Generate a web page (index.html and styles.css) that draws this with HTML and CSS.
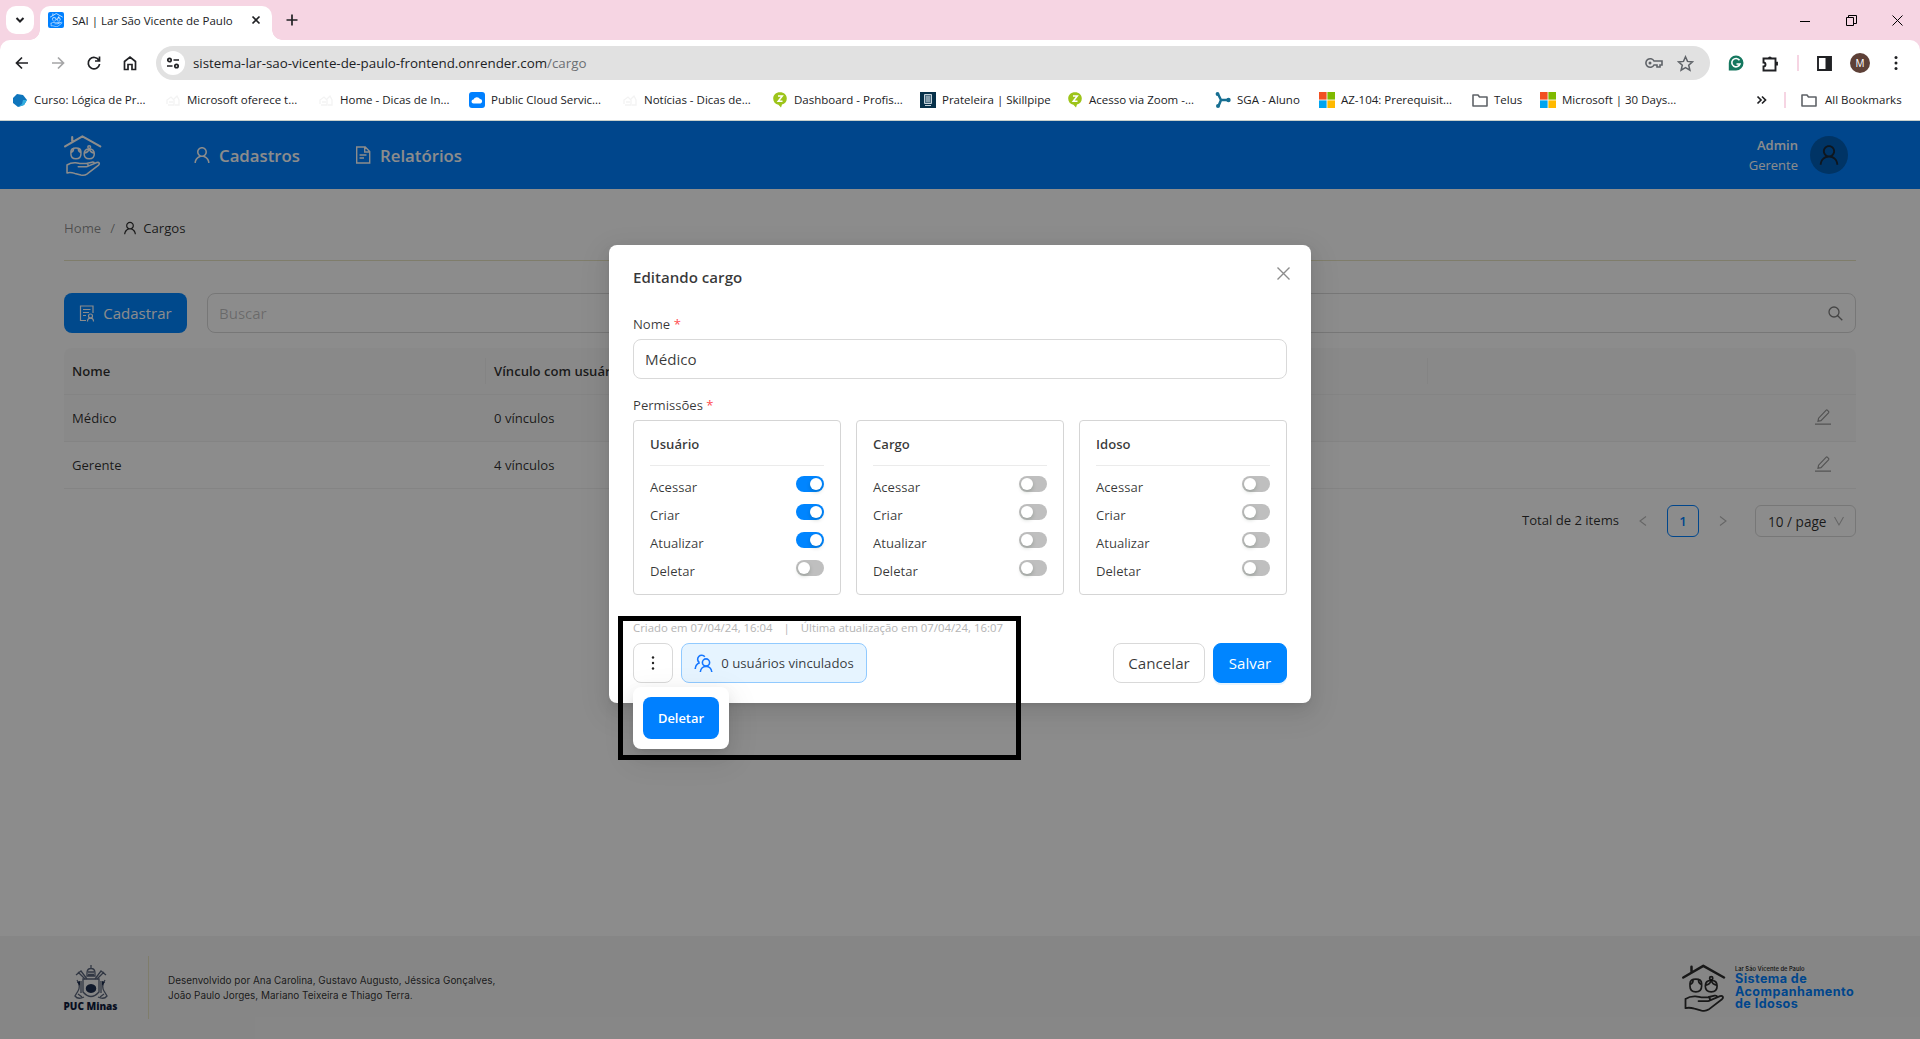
FILE: index.html
```html
<!DOCTYPE html>
<html lang="pt-BR">
<head>
<meta charset="utf-8">
<title>SAI | Lar São Vicente de Paulo</title>
<link rel="stylesheet" href="styles.css">
</head>
<body>
<svg class="defs" aria-hidden="true">
  <symbol id="user" viewBox="64 64 896 896"><path fill="currentColor" d="M858.5 763.6a374 374 0 00-80.6-119.5 375.63 375.63 0 00-119.5-80.6c-.4-.2-.8-.3-1.2-.5C719.500 518 760 444.700 760 362c0-137-111-248-248-248S264 225 264 362c0 82.700 40.500 156 102.800 201.100-.4.2-.8.3-1.200.5-44.800 18.900-85 46-119.500 80.600a375.630 375.630 0 00-80.600 119.500A371.700 371.700 0 00136 901.800a8 8 0 008 8.200h60c4.400 0 7.900-3.500 8-7.800 2-77.200 33-149.500 87.800-204.300 56.700-56.700 132-87.900 212.200-87.900s155.500 31.200 212.200 87.900C779 752.700 810 825 812 902.200c.1 4.400 3.600 7.800 8 7.800h60a8 8 0 008-8.200c-1-47.800-10.900-94.300-29.500-138.200zM512 534c-45.900 0-89.100-17.900-121.600-50.400S340 407.900 340 362c0-45.900 17.900-89.100 50.400-121.600S466.100 190 512 190s89.100 17.900 121.600 50.400S684 316.100 684 362c0 45.900-17.900 89.100-50.400 121.600S557.900 534 512 534z"/></symbol>
  <symbol id="care" viewBox="0 0 44 48"><g fill="none" stroke="currentColor" stroke-linecap="round" stroke-linejoin="round">
    <path stroke-width="2.500" d="M1.300 13.500 21.300 1.800 42 13.500M9.500 7.500V2.800"/>
    <g stroke-width="1.700"><path d="M8 19.500c0-3 2-4.300 5.800-4.300s5.800 1.300 5.800 4.300v2.700c0 3.600-2.400 5.600-5.800 5.600S8 25.800 8 22.200zM11 15.600c.3 2-.5 3.800-2.800 5M16.600 15.600c-.3 2 .5 3.800 2.800 5"/><path d="M23.300 22c0-3.500 2.300-5.600 5.900-5.600s5.900 2.100 5.900 5.600c0 3.600-2.300 5.800-5.900 5.800s-5.900-2.200-5.900-5.800zM29.200 16.400c-.8 2.600-2.500 4-5.300 4.700M29.200 16.400c.8 2.600 2.500 4 5.300 4.700"/><circle cx="29.200" cy="14.300" r="1.600"/></g>
    <path stroke-width="1.800" d="M3.500 35v9.200c3-.9 6-.4 9 .5l7 1.900c3 .7 5 .4 7-1L40 35.200c2-2 .5-3.900-2-3L28 36.300M3.500 35c3-2 6-2.800 10-2.600 3 .1 4 1 6 .9h6.500c2.700.2 2.700 3.600 0 3.800h-9.500M27 33l5.500-1.300c2-.4 3 .7 2.200 1.800"/>
  </g></symbol>
  <symbol id="edit" viewBox="0 0 16 16"><path fill="none" stroke="currentColor" stroke-width="1.200" d="M0 15.200h16M3 12.200l.6-3L11 1.300c.5-.5 1-.5 1.500 0l1 1c.4.5.4 1 0 1.500l-7.500 7.800zM3 12.200l3-.6"/></symbol>
  <symbol id="folder" viewBox="0 0 16 16"><path fill="none" stroke="#5f6368" stroke-width="1.600" stroke-linejoin="round" d="M1 3h5l1.500 2H15v9H1z"/></symbol>
  <symbol id="faint" viewBox="0 0 16 16"><path fill="none" stroke="#f3f3f3" stroke-width="1.300" d="M2 12V8l4-3 3 3v5H3M9 7l3-3 2 4v5h-4M4 10h4"/></symbol>
  <symbol id="zed" viewBox="0 0 16 16"><path fill="#9dc41a" d="M8 .3c4 0 6.800 2.700 6.800 6.300 0 3.500-2 5.400-4.800 6l-1 3-2.600-2.800C3.300 12.200 1.200 10 1.200 6.600 1.200 3 4 .3 8 .3z"/><path fill="none" stroke="#fff" stroke-width="1.500" d="M6 4h4.300L6.200 9.300h4.300"/></symbol>
  <symbol id="win" viewBox="0 0 16 16"><path fill="#f25022" d="M0 0h7.600v7.600H0z"/><path fill="#7fba00" d="M8.400 0H16v7.600H8.400z"/><path fill="#00a4ef" d="M0 8.400h7.600V16H0z"/><path fill="#ffb900" d="M8.400 8.400H16V16H8.400z"/></symbol>
</svg>

<div class="browser">
  <div class="tabstrip">
    <div class="tabsearch"><svg width="10" height="10" viewBox="0 0 10 10"><path class="ln2" d="M1.500 3 5 6.500 8.500 3"/></svg></div>
    <div class="tab">
      <span class="favicon"><svg width="13" height="14"><use href="#care"/></svg></span>
      <span class="tabtitle">SAI | Lar São Vicente de Paulo</span>
      <svg width="10" height="10" viewBox="0 0 10 10"><path class="ln" d="M1.500 1.500l7 7m0-7l-7 7"/></svg>
    </div>
    <svg class="newtab" width="12" height="12" viewBox="0 0 12 12"><path class="ln" d="M6 .5v11M.5 6h11"/></svg>
    <div class="winbtns">
      <svg width="11" height="11" viewBox="0 0 11 11"><path d="M0 6.500h10" stroke="#000"/></svg>
      <svg width="11" height="11" viewBox="0 0 11 11"><path d="M.5 2.500h7v8h-7zM2.500 2.500v-2h8v8h-3" fill="none" stroke="#000"/></svg>
      <svg width="11" height="11" viewBox="0 0 11 11"><path d="M.5.5l10 10m0-10l-10 10" stroke="#000"/></svg>
    </div>
  </div>
  <div class="toolbar">
    <div class="navbtns">
      <svg width="16" height="16" viewBox="0 0 16 16"><path class="ln" d="M14 8H3M8 2.500 2.500 8 8 13.500"/></svg>
      <svg class="off" width="16" height="16" viewBox="0 0 16 16"><path class="ln" d="M2 8h11M8 2.500 13.500 8 8 13.500"/></svg>
      <svg width="16" height="16" viewBox="0 0 16 16"><path class="ln" d="M13 5.500A5.700 5.700 0 1 0 13.600 9M13.500 1.500V6H9"/></svg>
      <svg width="16" height="16" viewBox="0 0 16 16"><path class="ln" d="M2.500 6.500 8 2l5.500 4.500v8H10v-5H6v5H2.500z"/></svg>
    </div>
    <div class="omnibox">
      <span class="siteinfo"><svg width="14" height="12" viewBox="0 0 14 12"><path class="ln" d="M7.500 3H13M1 9h5.500"/><circle class="ln" cx="3.500" cy="3" r="1.700"/><circle class="ln" cx="10.500" cy="9" r="1.700"/></svg></span>
      <span class="url">sistema-lar-sao-vicente-de-paulo-frontend.onrender.com<i>/cargo</i></span>
      <svg width="19" height="12" viewBox="0 0 19 12"><path fill="none" stroke="#5f6368" stroke-width="1.600" d="M10 4h8v4h-2v2h-3V8h-3a4.300 4.300 0 1 1 0-4z"/><circle cx="6" cy="6" r="1.500" fill="#5f6368"/></svg>
      <svg width="17" height="17" viewBox="0 0 17 17"><path fill="none" stroke="#5f6368" stroke-width="1.500" d="M8.500 1.800l2 4.600 5 .5-3.800 3.300 1.200 4.900-4.400-2.600-4.400 2.600 1.200-4.900L1.500 6.900l5-.5z"/></svg>
    </div>
    <div class="actions">
      <svg width="16" height="16" viewBox="0 0 16 16"><path fill="#15775f" d="M8 .5a7.500 7.500 0 1 1 0 15H.8V8A7.300 7.300 0 0 1 8 .5z"/><path fill="none" stroke="#fff" stroke-width="1.600" d="M11.500 5.300A4.200 4.200 0 1 0 12 9H8.500"/></svg>
      <svg width="17" height="17" viewBox="0 0 17 17"><path fill="none" stroke="#202124" stroke-width="1.900" d="M1.500 3.500h12v4.300h1.500v1.700h-1.500v6h-12v-4a2 2 0 0 0 0-4z"/><path fill="#202124" d="M6 3.500a1.900 1.900 0 0 1 3.800 0z"/></svg>
      <i class="pinkbar"></i>
      <svg width="15" height="15" viewBox="0 0 15 15"><path fill="none" stroke="#202124" stroke-width="1.900" d="M1 1h13v13H1z"/><path fill="#202124" d="M8.500 1H14v13H8.500z"/></svg>
      <b class="profile">M</b>
      <svg class="kebab" width="4" height="16" viewBox="0 0 4 16"><g fill="#202124"><circle cx="2" cy="2.500" r="1.500"/><circle cx="2" cy="8" r="1.500"/><circle cx="2" cy="13.500" r="1.500"/></g></svg>
    </div>
  </div>
  <div class="bookmarks">
    <span class="bm"><svg viewBox="0 0 16 16"><path fill="#0f75bc" d="M5 2l6 1 4 5-3 5-6 2-5-4 0-5z"/><path fill="#33aee0" d="M15 8l-3 5-6 2 4-3 1-4z"/></svg>Curso: Lógica de Pr...</span>
    <span class="bm"><svg><use href="#faint"/></svg>Microsoft oferece t...</span>
    <span class="bm"><svg><use href="#faint"/></svg>Home - Dicas de In...</span>
    <span class="bm"><svg viewBox="0 0 16 16"><rect width="16" height="16" rx="3" fill="#0080ff"/><path fill="#fff" d="M4.500 11.500a2 2 0 0 1 0-4 3.500 3 0 0 1 6.500-.5 2.300 2.300 0 0 1 .5 4.500z"/></svg>Public Cloud Servic...</span>
    <span class="bm"><svg><use href="#faint"/></svg>Notícias - Dicas de...</span>
    <span class="bm"><svg><use href="#zed"/></svg>Dashboard - Profis...</span>
    <span class="bm"><svg viewBox="0 0 16 16"><path fill="#07314a" d="M0 0h16v16H0z"/><path fill="#4d6f83" stroke="#c4d2da" d="M4.500 2.500h7v9h-7z"/><path stroke="#c4d2da" d="M6 5h4M6 7h4M6 9h4M5 13.500h6"/></svg>Prateleira | Skillpipe</span>
    <span class="bm"><svg><use href="#zed"/></svg>Acesso via Zoom -...</span>
    <span class="bm"><svg viewBox="0 0 16 16"><path fill="none" stroke="#176f92" stroke-width="2.500" d="M3 2l3 6-2.500 6M6 8h7"/><circle cx="2.500" cy="2" r="1.900" fill="#176f92"/><circle cx="3" cy="14" r="2" fill="#176f92"/><circle cx="13.500" cy="8" r="2.200" fill="#176f92"/></svg>SGA - Aluno</span>
    <span class="bm"><svg><use href="#win"/></svg>AZ-104: Prerequisit...</span>
    <span class="bm"><svg><use href="#folder"/></svg>Telus</span>
    <span class="bm"><svg><use href="#win"/></svg>Microsoft | 30 Days...</span>
    <svg class="more" viewBox="0 0 10 10"><path class="ln" d="M1 1.500 4.500 5 1 8.500M5.500 1.500 9 5 5.500 8.500"/></svg>
    <i class="pinkbar"></i>
    <span class="bm"><svg><use href="#folder"/></svg>All Bookmarks</span>
  </div>
</div>

<div class="app">
  <header class="topbar">
    <svg class="brand"><use href="#care"/></svg>
    <nav>
      <span class="navitem"><svg width="18" height="18"><use href="#user"/></svg>Cadastros</span>
      <span class="navitem"><svg width="18" height="18" viewBox="0 0 18 18"><path fill="none" stroke="currentColor" stroke-width="1.400" d="M2.700 1h8.500L15.700 5.500V17h-13zM10.700 1v5h5M5.500 9h7M5.500 12h4.500"/></svg>Relatórios</span>
    </nav>
    <div class="who"><b>Admin</b><span>Gerente</span></div>
    <div class="avatar"><svg width="22" height="22"><use href="#user"/></svg></div>
  </header>
  <main>
    <div class="crumbs"><span class="dim">Home</span><span class="dim slash">/</span><svg width="14" height="14"><use href="#user"/></svg><span>Cargos</span></div>
    <div class="tools">
      <div class="btn-new"><svg width="16" height="17" viewBox="0 0 16 17"><g fill="none" stroke="currentColor" stroke-width="1.200"><path d="M7 15.500H1.500V1h12.500v7M4 4.500h7.500M4 7.500h6M4 10.500h3"/><circle cx="11.500" cy="11" r="2"/><path d="M8.500 16.500c0-4.500 6-4.500 6 0"/></g></svg>Cadastrar</div>
      <div class="search"><span>Buscar</span><svg width="15" height="15" viewBox="0 0 15 15"><g fill="none" stroke="currentColor" stroke-width="1.300"><circle cx="6" cy="6" r="5"/><path d="M9.700 9.700l4.600 4.600"/></g></svg></div>
    </div>
    <div class="table">
      <div class="tr th"><div>Nome</div><div>Vínculo com usuários</div><div></div></div>
      <div class="tr hover"><div>Médico</div><div>0 vínculos</div><div><svg width="16" height="16"><use href="#edit"/></svg></div></div>
      <div class="tr"><div>Gerente</div><div>4 vínculos</div><div><svg width="16" height="16"><use href="#edit"/></svg></div></div>
    </div>
    <div class="pager">
      <span class="total">Total de 2 items</span>
      <svg class="arrow" viewBox="0 0 12 12"><path d="M9 1.500 3 6l6 4.500"/></svg>
      <span class="page">1</span>
      <svg class="arrow" viewBox="0 0 12 12"><path d="M3 1.500 9 6l-6 4.500"/></svg>
      <span class="size">10 / page<svg class="arrow" viewBox="0 0 12 12"><path d="M1.500 2 6 10l4.500-8"/></svg></span>
    </div>
  </main>
  <footer>
    <div class="puc">
      <svg width="36" height="36" viewBox="0 0 36 36"><g fill="none" stroke="#59647a" stroke-width="1.300"><path d="M14 9c0-6 8-6 8 0v3h-8zM18 1v4M15 8h6M15 10.500h6"/><path d="M10 15h16v13q-8 9-16 0z"/><path d="M3 11l5-4 6 8M33 11l-5-4-6 8M5 8l7 7M31 8l-7 7"/><path d="M4 16q4 6 1 11t-3 5q3 4 9 1M32 16q-4 6-1 11t3 5q-3 4-9 1M8 17v12M28 17v12M5 30l4 3M31 30l-4 3"/></g><path fill="#1e2f4f" d="M18 20c7 0 7 9 0 9s-7-9 0-9zM4 18l3-1v5zM32 18l-3-1v5z"/></svg>
      <b>PUC Minas</b>
    </div>
    <p class="credits">Desenvolvido por Ana Carolina, Gustavo Augusto, Jéssica Gonçalves,<br>João Paulo Jorges, Mariano Teixeira e Thiago Terra.</p>
    <div class="sai">
      <svg width="44" height="48"><use href="#care"/></svg>
      <div><small>Lar São Vicente de Paulo</small><b>Sistema de<br>Acompanhamento<br>de Idosos</b></div>
    </div>
  </footer>

  <div class="mask"></div>
  <div class="modal">
    <div class="head"><h1>Editando cargo</h1><svg width="13" height="13" viewBox="0 0 13 13"><path fill="none" stroke="#8c8c8c" stroke-width="1.400" d="M.5.5l12 12m0-12l-12 12"/></svg></div>
    <label>Nome <em>*</em></label>
    <div class="input">Médico</div>
    <label class="second">Permissões <em>*</em></label>
    <div class="cards">
      <section class="card"><h2>Usuário</h2>
        <div class="perm">Acessar<i class="switch on"></i></div><div class="perm">Criar<i class="switch on"></i></div><div class="perm">Atualizar<i class="switch on"></i></div><div class="perm">Deletar<i class="switch"></i></div></section>
      <section class="card"><h2>Cargo</h2>
        <div class="perm">Acessar<i class="switch"></i></div><div class="perm">Criar<i class="switch"></i></div><div class="perm">Atualizar<i class="switch"></i></div><div class="perm">Deletar<i class="switch"></i></div></section>
      <section class="card"><h2>Idoso</h2>
        <div class="perm">Acessar<i class="switch"></i></div><div class="perm">Criar<i class="switch"></i></div><div class="perm">Atualizar<i class="switch"></i></div><div class="perm">Deletar<i class="switch"></i></div></section>
    </div>
    <div class="stamps"><span>Criado em 07/04/24, 16:04</span><span>|</span><span>Última atualização em 07/04/24, 16:07</span></div>
    <div class="foot">
      <div class="btn dots"><svg width="4" height="16" viewBox="0 0 4 16"><g fill="#222"><circle cx="2" cy="2.500" r="1.200"/><circle cx="2" cy="8" r="1.200"/><circle cx="2" cy="13.500" r="1.200"/></g></svg></div>
      <div class="btn linked"><svg width="19" height="19" viewBox="0 0 19 19"><g fill="none" stroke="#1677ff" stroke-width="1.600"><circle cx="12" cy="8.500" r="3.600"/><path d="M6.300 18c.5-7.500 11-7.500 11.500 0"/><path d="M10.800 2.800A4 4 0 1 0 5.300 8.500M1.200 15c.2-3.500 1.600-5.500 4.600-6.300"/></g></svg>0 usuários vinculados</div>
      <span class="grow"></span>
      <div class="btn cancel">Cancelar</div>
      <div class="btn save">Salvar</div>
    </div>
  </div>
  <div class="popover"><div class="delete">Deletar</div></div>
  <div class="marker"></div>
</div>
</body>
</html>
```
FILE: styles.css
```css
* { box-sizing: border-box; }
body { margin: 0; width: 1920px; height: 1039px; overflow: hidden; position: relative; font-family: "Open Sans", "Noto Sans", sans-serif; font-size: 13.1px; color: rgba(0,0,0,.82); background: #fff; }
svg { display: block; flex: none; }
i { font-style: normal; }
.defs { position: absolute; width: 0; height: 0; }
.ln { fill: none; stroke: #202124; stroke-width: 1.7; }
.ln2 { fill: none; stroke: #202124; stroke-width: 2; }
.off { opacity: .4; }

/* browser chrome */
.browser { height: 121px; border-bottom: 1px solid #c8d0cc; background: #f6d5e3; font-size: 11.5px; color: #202124; white-space: nowrap; }
.tabstrip { height: 40px; display: flex; align-items: center; padding-left: 6px; }
.tabsearch { width: 28px; height: 28px; border-radius: 10px; background: #fff; display: grid; place-items: center; }
.tab { position: relative; align-self: flex-end; width: 232px; height: 34px; margin-left: 6px; padding: 0 11px 6px 8px; background: #fff; border-radius: 10px 10px 0 0; display: flex; align-items: center; gap: 8px; }
.tab::before, .tab::after { content: ""; position: absolute; bottom: 0; width: 10px; height: 10px; }
.tab::before { left: -10px; background: radial-gradient(circle at 0 0, transparent 9.5px, #fff 10px); }
.tab::after { right: -10px; background: radial-gradient(circle at 100% 0, transparent 9.5px, #fff 10px); }
.favicon { width: 16px; height: 16px; border-radius: 2px; background: #0080ff; color: #fff; display: grid; place-items: center; }
.tabtitle { flex: 1; }
.newtab { margin-left: 14px; }
.winbtns { margin-left: auto; display: flex; gap: 35px; padding-right: 17px; }
.toolbar { height: 45px; background: #fff; border-radius: 10px 10px 0 0; display: flex; align-items: center; padding: 1px 20px 0 14px; }
.navbtns { display: flex; gap: 20px; width: 142px; }
.omnibox { width: 1554px; height: 34px; border-radius: 17px; background: #e1e1e1; display: flex; align-items: center; padding: 0 16px 0 5px; gap: 14px; }
.siteinfo { width: 24px; height: 24px; border-radius: 12px; background: #fff; display: grid; place-items: center; }
.url { flex: 1; font-size: 13.35px; margin-left: -6px; }
.url i { color: #6c6f73; }
.actions { display: flex; align-items: center; gap: 18px; margin-left: 18px; }
.actions .kebab { margin-left: 6px; }
.pinkbar { width: 2px; height: 16px; background: #f6d5e3; }
.profile { width: 20px; height: 20px; border-radius: 50%; background: #5d4037; color: #fff; font-weight: 400; font-size: 10px; display: grid; place-items: center; }
.bookmarks { height: 35px; background: #fff; display: grid; align-items: center; padding: 0 0 6px 12px; grid-template-columns: 153px 153px 151px 153px 150px 148px 147px 148px 104px 153px 68px 216px 28px 17px 120px; }
.bm { display: flex; align-items: center; gap: 6px; line-height: 16px; }
.bm:last-child { gap: 8px; }
.bm svg { width: 16px; height: 16px; }
.more { width: 11px; height: 10px; }

/* application */
.app { height: 918px; display: flex; flex-direction: column; }
.topbar { height: 68px; background: #0080ff; color: #fff; display: flex; align-items: center; padding: 0 72px 0 64px; }
.brand { width: 38px; height: 43px; }
nav { display: flex; gap: 54px; margin-left: 91px; flex: 1; }
.navitem { display: flex; align-items: center; gap: 8px; font-size: 16.8px; font-weight: 600; }
.who { display: flex; flex-direction: column; text-align: right; line-height: 20px; font-size: 13px; }
.who b { font-weight: 600; }
.avatar { width: 38px; height: 38px; border-radius: 50%; margin-left: 12px; background: #005fb8; color: #1a2838; display: grid; place-items: center; }
main { flex: 1; padding: 0 64px; }
.crumbs { height: 72px; border-bottom: 1px solid #e8e4c4; padding-top: 30px; line-height: 18px; font-size: 13.2px; display: flex; }
.crumbs svg { margin: 2px 6px 0 0; }
.dim { color: rgba(0,0,0,.45); }
.slash { margin: 0 8px 0 9px; }
.tools { display: flex; gap: 20px; margin-top: 32px; }
.btn-new { width: 123px; height: 40px; border-radius: 8px; background: #0085ff; color: #fff; font-size: 15px; display: flex; align-items: center; justify-content: center; gap: 8px; }
.search { flex: 1; height: 40px; border: 1px solid #d9d9d9; border-radius: 8px; padding: 0 12px 0 11px; display: flex; align-items: center; justify-content: space-between; font-size: 15px; color: rgba(0,0,0,.5); }
.search span { color: rgba(0,0,0,.25); }
.table { margin-top: 15px; }
.tr { height: 47px; border-bottom: 1px solid #f0f0f0; display: grid; grid-template-columns: 422px 942px 1fr; align-items: center; }
.tr div { padding-left: 8px; }
.tr div:last-child { display: flex; justify-content: flex-end; padding: 0 25px 3px 0; color: rgba(0,0,0,.4); }
.th { background: #fafafa; font-weight: 600; border-radius: 8px 8px 0 0; }
.th div { height: 26px; line-height: 26px; border-right: 1px solid #f0f0f0; }
.th div:last-child { border: 0; }
.hover { background: #fafafa; }
.pager { margin-top: 16px; display: flex; justify-content: flex-end; align-items: center; }
.total { padding-bottom: 3px; }
.arrow { width: 12px; height: 12px; fill: none; stroke: rgba(0,0,0,.28); stroke-width: 1.1; margin-left: 18px; }
.page { width: 32px; height: 32px; border: 1px solid #0080ff; border-radius: 6px; color: #0080ff; display: grid; place-items: center; font-weight: 600; margin-left: 18px; }
.size { width: 101px; height: 32px; border: 1px solid #d9d9d9; border-radius: 6px; margin-left: 26px; padding: 0 10px 0 12px; display: flex; align-items: center; justify-content: space-between; font-size: 13.6px; }
.size .arrow { margin: 0; }
footer { height: 103px; background: #f5f5f5; padding: 0 64px; display: flex; align-items: center; font-family: Inter, sans-serif; }
.puc { width: 85px; height: 63px; padding: 8px 31px 0 0; border-right: 1px solid #e8e4c4; display: flex; flex-direction: column; align-items: center; color: #101c3c; font: 700 10px/13px "Open Sans", sans-serif; white-space: nowrap; }
.credits { margin: 0 0 0 19px; flex: 1; font-size: 9.95px; line-height: 15px; }
.sai { display: flex; gap: 9px; align-items: center; width: 174px; }
.sai small { display: block; font-size: 5.8px; line-height: 9px; font-weight: 600; }
.sai b { display: block; font-size: 12.6px; line-height: 12.4px; letter-spacing: .42px; color: #0080ff; white-space: nowrap; }

/* overlay layers */
.mask { position: absolute; inset: 121px 0 0; background: rgba(0,0,0,.45); }
.modal { position: absolute; left: 609px; top: 245px; width: 702px; height: 458px; padding: 0 24px; background: #fff; border-radius: 8px; box-shadow: 0 6px 16px rgba(0,0,0,.08), 0 3px 6px -4px rgba(0,0,0,.12), 0 9px 28px 8px rgba(0,0,0,.05); color: rgba(0,0,0,.78); }
.head { display: flex; justify-content: space-between; height: 70px; padding: 21px 0 0; }
.head h1 { margin: 0; font-size: 15.1px; line-height: 22px; font-weight: 600; }
.head svg { margin: 1px -3px 0 0; }
label { display: block; height: 24px; line-height: 18px; }
em { color: #ff4d4f; font-style: normal; }
.input { height: 40px; border: 1px solid #d9d9d9; border-radius: 8px; padding-left: 11px; font-size: 15.2px; line-height: 38px; }
.second { margin-top: 17px; height: 24px; }
.cards { display: grid; grid-template-columns: repeat(3, 1fr); gap: 15px; }
.card { height: 175px; border: 1px solid #d5d5d5; border-radius: 4px; padding: 0 16px; }
.card h2 { margin: 0 0 8px; height: 45px; line-height: 46px; font-size: 13.1px; font-weight: 600; border-bottom: 1px solid #ebebeb; }
.perm { height: 28px; line-height: 26px; display: flex; justify-content: space-between; }
.switch { width: 28px; height: 16px; border-radius: 8px; background: #bfbfbf; margin-top: 2px; padding: 2px; }
.switch::before { content: ""; display: block; width: 12px; height: 12px; border-radius: 6px; background: #fff; box-shadow: 0 2px 4px rgba(0,35,11,.2); }
.on { background: #0085ff; }
.on::before { margin-left: 12px; }
.stamps { margin-top: 22px; height: 26px; line-height: 21px; font-size: 11.35px; color: #b4b4b4; display: flex; gap: 11px; white-space: nowrap; }
.foot { display: flex; gap: 8px; }
.grow { flex: 1; }
.btn { height: 40px; border: 1px solid #d9d9d9; border-radius: 8px; display: flex; align-items: center; justify-content: center; font-size: 15px; }
.dots { width: 40px; }
.linked { width: 186px; background: #e6f4ff; border-color: #91caff; gap: 8px; font-size: 13.2px; }
.cancel { width: 92px; font-size: 15.2px; }
.save { width: 74px; background: #0085ff; border-color: #0085ff; color: #fff; box-shadow: 0 2px 0 rgba(5,145,255,.1); }
.popover { position: absolute; left: 633px; top: 687px; width: 96px; height: 62px; padding: 10px; border-radius: 8px; background: #fff; box-shadow: 0 6px 16px rgba(0,0,0,.08), 0 3px 6px -4px rgba(0,0,0,.12), 0 9px 28px 8px rgba(0,0,0,.05); }
.delete { height: 42px; border-radius: 8px; background: #0080ff; color: #fff; font-weight: 600; font-size: 12.9px; display: grid; place-items: center; }
.marker { position: absolute; left: 618px; top: 616px; width: 403px; height: 144px; border: 5px solid #000; }
```
